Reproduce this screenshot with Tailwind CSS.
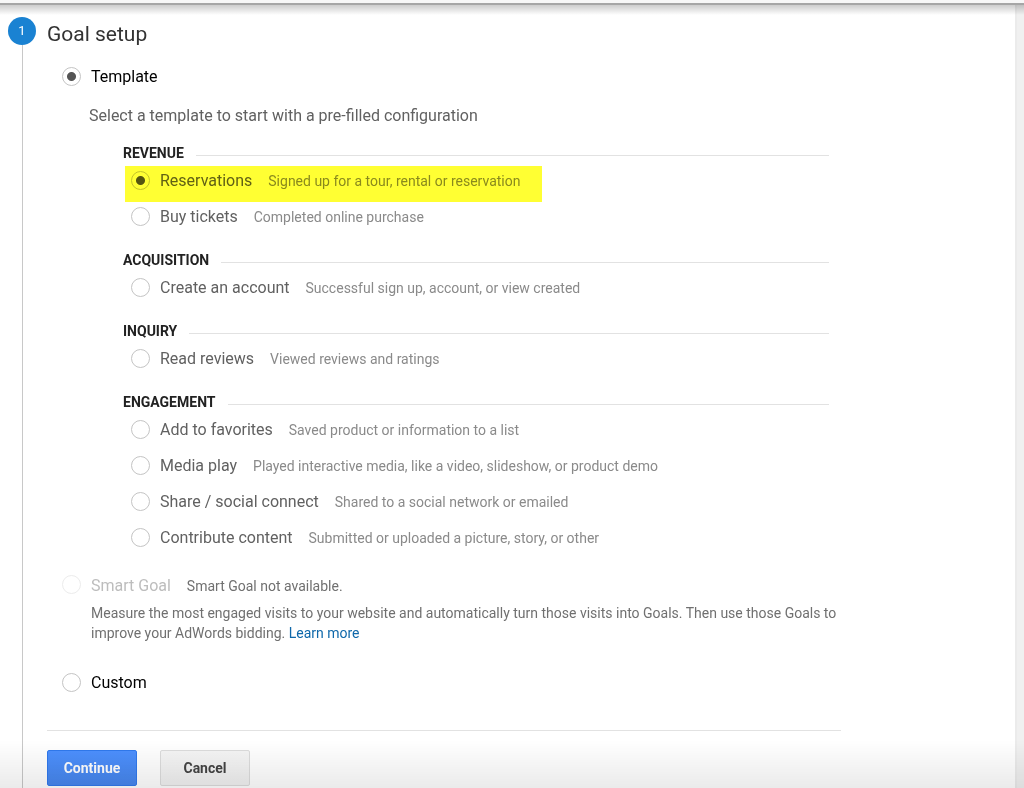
<!DOCTYPE html>
<html lang="en">

<head>
    <meta charset="UTF-8">
    <meta name="viewport" content="width=device-width, initial-scale=1.0">
    <title>Goal setup</title>
    <script src="https://cdn.jsdelivr.net/npm/@tailwindcss/browser@4"></script>
</head>

<body class="h-screen overflow-hidden flex flex-col bg-white font-['Roboto','Liberation_Sans',sans-serif] text-[#616161]">
    <!-- Bottom edge of the header and its shadow -->
    <div class="relative z-10 h-[3px] shrink-0 bg-[#f7f7f7]">
        <div class="absolute inset-x-0 top-full h-3 border-t-2 border-[#a6a6a6] bg-linear-to-b from-black/20 to-transparent pointer-events-none"></div>
    </div>

    <div class="flex flex-1 min-h-0">
        <!-- Step number and connecting line -->
        <div class="w-[44px] shrink-0 flex flex-col items-center pt-[14px]">
            <div class="size-7 shrink-0 rounded-full bg-[#1a82d2] text-white text-[13px] flex items-center justify-center">1</div>
            <div class="w-px flex-1 bg-[#c8c8c8]"></div>
        </div>

        <form class="flex-1 pl-[3px] pt-4">
            <div class="max-w-[794px]">
                <h1 class="text-[21px] leading-[30px] text-[#333]">Goal setup</h1>

                <div class="pl-[15px]">
                    <label class="flex items-center h-9 mt-[10px] text-base text-black">
                        <input type="radio" name="type" checked class="appearance-none size-[19px] shrink-0 mb-[2px] mr-[10px] rounded-full border border-[#c4c4c4] bg-white checked:bg-[radial-gradient(circle,#555_4px,white_5px)]">
                        Template
                    </label>
                    <p class="ml-[27px] mt-[9px] text-base leading-6">Select a template to start with a pre-filled configuration</p>

                    <div class="pl-[61px] pr-3 mt-[15px] flex flex-col gap-[15px]">
                        <section>
                            <h2 class="flex items-center gap-3 text-sm leading-5 font-bold text-[#222] after:flex-1 after:h-px after:mt-1 after:bg-[#e2e2e2]">REVENUE</h2>
                            <label class="relative flex items-center h-9 pl-2">
                                <input type="radio" name="goal" checked class="appearance-none size-[19px] shrink-0 mb-[2px] mr-[10px] rounded-full border border-[#c4c4c4] bg-white checked:bg-[radial-gradient(circle,#555_4px,white_5px)]">
                                <span class="text-base">Reservations <span class="ml-3 text-sm text-[#8a8a8a]">Signed up for a tour, rental or reservation</span></span>
                                <!-- Highlighter mark -->
                                <span class="absolute left-[2px] top-[3px] w-[417px] h-9 bg-[#ffff33] mix-blend-multiply pointer-events-none"></span>
                            </label>
                            <label class="flex items-center h-9 pl-2">
                                <input type="radio" name="goal" class="appearance-none size-[19px] shrink-0 mb-[2px] mr-[10px] rounded-full border border-[#c4c4c4] bg-white checked:bg-[radial-gradient(circle,#555_4px,white_5px)]">
                                <span class="text-base">Buy tickets <span class="ml-3 text-sm text-[#8a8a8a]">Completed online purchase</span></span>
                            </label>
                        </section>

                        <section>
                            <h2 class="flex items-center gap-3 text-sm leading-5 font-bold text-[#222] after:flex-1 after:h-px after:mt-1 after:bg-[#e2e2e2]">ACQUISITION</h2>
                            <label class="flex items-center h-9 pl-2">
                                <input type="radio" name="goal" class="appearance-none size-[19px] shrink-0 mb-[2px] mr-[10px] rounded-full border border-[#c4c4c4] bg-white checked:bg-[radial-gradient(circle,#555_4px,white_5px)]">
                                <span class="text-base">Create an account <span class="ml-3 text-sm text-[#8a8a8a]">Successful sign up, account, or view created</span></span>
                            </label>
                        </section>

                        <section>
                            <h2 class="flex items-center gap-3 text-sm leading-5 font-bold text-[#222] after:flex-1 after:h-px after:mt-1 after:bg-[#e2e2e2]">INQUIRY</h2>
                            <label class="flex items-center h-9 pl-2">
                                <input type="radio" name="goal" class="appearance-none size-[19px] shrink-0 mb-[2px] mr-[10px] rounded-full border border-[#c4c4c4] bg-white checked:bg-[radial-gradient(circle,#555_4px,white_5px)]">
                                <span class="text-base">Read reviews <span class="ml-3 text-sm text-[#8a8a8a]">Viewed reviews and ratings</span></span>
                            </label>
                        </section>

                        <section>
                            <h2 class="flex items-center gap-3 text-sm leading-5 font-bold text-[#222] after:flex-1 after:h-px after:mt-1 after:bg-[#e2e2e2]">ENGAGEMENT</h2>
                            <label class="flex items-center h-9 pl-2">
                                <input type="radio" name="goal" class="appearance-none size-[19px] shrink-0 mb-[2px] mr-[10px] rounded-full border border-[#c4c4c4] bg-white checked:bg-[radial-gradient(circle,#555_4px,white_5px)]">
                                <span class="text-base">Add to favorites <span class="ml-3 text-sm text-[#8a8a8a]">Saved product or information to a list</span></span>
                            </label>
                            <label class="flex items-center h-9 pl-2">
                                <input type="radio" name="goal" class="appearance-none size-[19px] shrink-0 mb-[2px] mr-[10px] rounded-full border border-[#c4c4c4] bg-white checked:bg-[radial-gradient(circle,#555_4px,white_5px)]">
                                <span class="text-base">Media play <span class="ml-3 text-sm text-[#8a8a8a]">Played interactive media, like a video, slideshow, or product demo</span></span>
                            </label>
                            <label class="flex items-center h-9 pl-2">
                                <input type="radio" name="goal" class="appearance-none size-[19px] shrink-0 mb-[2px] mr-[10px] rounded-full border border-[#c4c4c4] bg-white checked:bg-[radial-gradient(circle,#555_4px,white_5px)]">
                                <span class="text-base">Share / social connect <span class="ml-3 text-sm text-[#8a8a8a]">Shared to a social network or emailed</span></span>
                            </label>
                            <label class="flex items-center h-9 pl-2">
                                <input type="radio" name="goal" class="appearance-none size-[19px] shrink-0 mb-[2px] mr-[10px] rounded-full border border-[#c4c4c4] bg-white checked:bg-[radial-gradient(circle,#555_4px,white_5px)]">
                                <span class="text-base">Contribute content <span class="ml-3 text-sm text-[#8a8a8a]">Submitted or uploaded a picture, story, or other</span></span>
                            </label>
                        </section>
                    </div>

                    <label class="flex items-center h-[35px] mt-3">
                        <input type="radio" name="type" disabled class="appearance-none size-[19px] shrink-0 mb-[2px] mr-[10px] rounded-full border border-[#ececec] bg-white">
                        <span class="text-base text-[#bdbdbd]">Smart Goal <span class="ml-3 text-sm text-[#707070]">Smart Goal not available.</span></span>
                    </label>
                    <p class="ml-[29px] text-sm leading-5 text-[#707070]">Measure the most engaged visits to your website and automatically turn those visits into Goals. Then use those Goals to improve your AdWords bidding. <a href="#" class="text-[#0f68aa]">Learn more</a></p>

                    <label class="flex items-center h-9 mt-[22px] text-base text-black">
                        <input type="radio" name="type" class="appearance-none size-[19px] shrink-0 mb-[2px] mr-[10px] rounded-full border border-[#c4c4c4] bg-white checked:bg-[radial-gradient(circle,#555_4px,white_5px)]">
                        Custom
                    </label>
                </div>

                <div class="flex gap-[23px] mt-[29px] pt-[19px] border-t border-[#e2e2e2]">
                    <button type="submit" class="w-[90px] h-9 rounded-xs border border-[#3079ed] bg-linear-to-b from-[#4d90fe] to-[#4787ed] text-white text-sm font-bold">Continue</button>
                    <button type="button" class="w-[90px] h-9 rounded-xs border border-[#dcdcdc] bg-linear-to-b from-[#f5f5f5] to-[#f1f1f1] text-[#444] text-sm font-bold">Cancel</button>
                </div>
            </div>
        </form>

        <div class="w-[9px] shrink-0 bg-[#f0f0f0] border-l-2 border-[#ebebeb]"></div>
    </div>

    <!-- Shade along the bottom of the window -->
    <div class="fixed inset-x-0 bottom-0 h-12 bg-linear-to-t from-black/8 to-transparent pointer-events-none"></div>
</body>

</html>
